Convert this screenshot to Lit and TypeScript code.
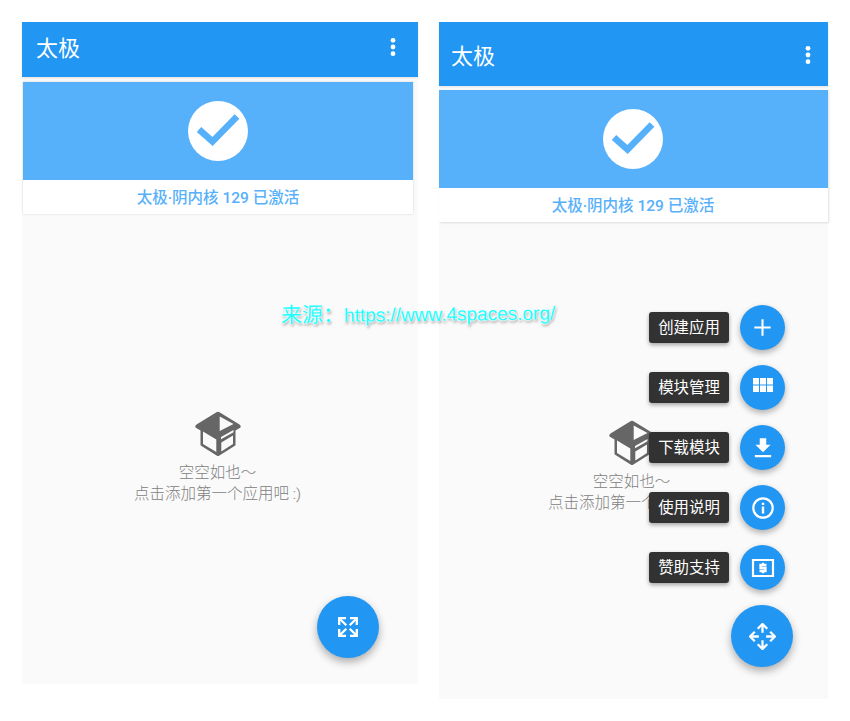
import { LitElement, html, css, svg } from "lit";
import { customElement } from "lit/decorators.js";

const sv = (inner: unknown, size: number, box = 24) =>
  html`<svg width=${size} height=${size} viewBox="0 0 ${box} ${box}">${inner}</svg>`;

const ICONS = {
  dots: sv(svg`<circle cx="12" cy="5.300" r="2.400" fill="#fff"/><circle cx="12" cy="12" r="2.400" fill="#fff"/><circle cx="12" cy="18.700" r="2.400" fill="#fff"/>`, 24),
  check: sv(svg`<circle cx="30" cy="30" r="30" fill="#fff"/><path d="M11 28.500 L24.500 40.500 L49 15.500" fill="none" stroke="#57b0fa" stroke-width="6.600"/>`, 60, 60),
  box: html`<svg width="48" height="46" viewBox="6 4 48 46">
    <path fill="#666" fill-rule="evenodd" d="M28.500 5.200 Q30 4.300 31.500 5.200 L51.500 17.500 Q53.500 19 52.500 20.500 L47.500 23.500 L47.500 37.500 Q47.500 38.500 46.500 39 L31 48.800 Q30 49.300 29 48.800 L13.500 39 Q12.500 38.500 12.500 37.500 L12.500 23.500 L7.500 20.500 Q6.500 19 8.500 17.500 Z
      M15 24.500 L28.300 32.500 L28.300 45 L15 37 Z
      M31.700 9.500 L45.500 17 L31.700 24 Z
      M33 30 L45.500 23 L45.500 25.300 L33 32.300 Z
      M33.300 35.500 L45 28.500 L45 37 L33.300 44.500 Z"/>
  </svg>`,
  plus: sv(svg`<path d="M12 3.500V20.500M3.500 12H20.500" stroke="#fff" stroke-width="2.200" fill="none"/>`, 23, 24),
  grid: sv(svg`<path fill="#fff" d="M0 0h6v6.500H0zM7 0h6v6.500H7zM14 0h6v6.500h-6zM0 7.500h6V14H0zM7 7.500h6V14H7zM14 7.500h6V14h-6z"/>`, 20, 20),
  download: sv(svg`<path fill="#fff" d="M19 9h-4V3H9v6H5l7 7 7-7zM4.500 18.500v2h15v-2z"/>`, 26),
  info: sv(svg`<circle cx="12" cy="12" r="9.700" fill="none" stroke="#fff" stroke-width="2.200"/><path fill="#fff" d="M10.800 10.500h2.400v7h-2.400zM10.800 6.700h2.400v2.400h-2.400z"/>`, 24),
  money: sv(svg`<path fill="none" stroke="#fff" stroke-width="2.200" d="M2 4h20v16H2z"/><path fill="none" stroke="#fff" stroke-width="2.300" d="M15.500 9H9.500v3h5v3H8.500M12 6.800v2.200M12 15v2.200"/>`, 24),
  move: sv(svg`<g fill="none" stroke="#fff" stroke-width="2.200"><path d="M13 1.500V9.500M13 16.500V24.500M1.500 13H9.500M16.500 13H24.500"/><path d="M8.400 5.600 13 1l4.600 4.600M8.400 20.400 13 25l4.600-4.600M5.600 8.400 1 13l4.600 4.600M20.400 8.400 25 13l-4.600 4.600"/></g>`, 27, 26),
  expand: sv(svg`<g fill="none" stroke="#fff" stroke-width="2.300"><path d="M1.200 8V1.200H8M1.200 1.200 8.300 8.300M12 1.200h6.800V8M18.800 1.200 11.700 8.300M1.200 12v6.800H8M1.200 18.800l7.100-7.100M18.800 12v6.800H12M18.800 18.800l-7.100-7.100"/></g>`, 20, 20),
};

const MENU = [
  ["创建应用", ICONS.plus],
  ["模块管理", ICONS.grid],
  ["下载模块", ICONS.download],
  ["使用说明", ICONS.info],
  ["赞助支持", ICONS.money],
] as const;

@customElement("app-root")
export class AppRoot extends LitElement {
  static styles = css`
    :host {
      display: block;
      position: relative;
      width: 850px;
      height: 721px;
      overflow: hidden;
      background: #fff;
      font-family: Roboto, "Noto Sans CJK SC", sans-serif;
    }
    .page {
      display: flex;
      align-items: flex-start;
      gap: 21px;
      padding: 22px 0 0 22px;
    }
    .phone {
      position: relative;
      display: flex;
      flex-direction: column;
      background: #fafafa;
    }
    .phone.a { width: 396px; height: 662px; }
    .phone.b { width: 389px; height: 677px; }
    .bar {
      display: flex;
      align-items: center;
      justify-content: space-between;
      flex: none;
      box-sizing: border-box;
      background: #2196f3;
      color: #fff;
      font-size: 22px;
      box-shadow: 0 1px 2px rgba(0, 0, 0, 0.1);
    }
    .bar span { padding-bottom: 3px; }
    .a .bar { height: 55px; padding: 0 13px 5px 14px; }
    .b .bar { height: 64px; padding: 2px 8px 0 12px; }
    .card {
      flex: none;
      margin-top: 4px;
      background: #fff;
      box-shadow: 1px 1px 2px rgba(0, 0, 0, 0.12);
    }
    .a .card {
      margin: 5px 5px 0 1px;
      box-shadow: 0 0 2px rgba(0, 0, 0, 0.16);
    }
    .banner {
      display: flex;
      align-items: center;
      justify-content: center;
      height: 98px;
      background: #57b0fa;
    }
    .b .banner { padding-right: 1px; }
    .status {
      box-sizing: border-box;
      height: 34px;
      padding-top: 1px;
      line-height: 34px;
      text-align: center;
      color: #57b0fa;
      font-size: 15.500px;
      font-weight: 500;
    }
    .b .status { padding-right: 1px; }
    .empty {
      flex: 1;
      display: flex;
      flex-direction: column;
      align-items: center;
      justify-content: center;
      color: #808080;
      font-size: 15.500px;
      line-height: 21px;
      font-weight: 300;
      text-align: center;
    }
    .a .empty { padding: 18px 5px 0 0; }
    .b .empty { padding: 13px 4px 0 0; }
    .empty svg { display: block; margin-bottom: 6px; }
    .fab {
      display: flex;
      align-items: center;
      justify-content: center;
      flex: none;
      width: 62px;
      height: 62px;
      border-radius: 50%;
      background: #2196f3;
      box-shadow: 0 4px 8px rgba(0, 0, 0, 0.32);
    }
    .a .fab { position: absolute; right: 39px; bottom: 26px; }
    .dial {
      position: absolute;
      right: 35px;
      bottom: 32px;
      display: flex;
      flex-direction: column;
      align-items: flex-end;
      gap: 15px;
    }
    .row {
      display: flex;
      align-items: center;
      gap: 11px;
      padding-right: 8px;
    }
    .label {
      width: 80px;
      height: 31px;
      line-height: 32px;
      text-align: center;
      border-radius: 3px;
      background: #323232;
      color: #fff;
      font-size: 15.400px;
      box-shadow: 0 2px 4px rgba(0, 0, 0, 0.35);
    }
    .mini {
      display: flex;
      align-items: center;
      justify-content: center;
      width: 45px;
      height: 45px;
      border-radius: 50%;
      background: #2196f3;
      box-shadow: 0 3px 6px rgba(0, 0, 0, 0.3);
    }
    .mark {
      position: absolute;
      left: 281px;
      top: 300px;
      white-space: nowrap;
      color: #1cffff;
      font-family: "Liberation Sans", "Noto Sans CJK SC", sans-serif;
      font-size: 19px;
      line-height: 28px;
      transform: rotate(-0.6deg);
      text-shadow: 0 0 1px #fff, 0 0 2px #fff, 0 0 2px #fff, 0 0 3px #fff, 1px 2px 3px rgba(0, 0, 0, 0.5);
    }
    .mark span { font-size: 21px; }
  `;

  private phone(kind: string, overlay: unknown) {
    return html`
      <section class="phone ${kind}">
        <header class="bar"><span>太极</span>${ICONS.dots}</header>
        <div class="card">
          <div class="banner">${ICONS.check}</div>
          <div class="status">太极·阴内核 129 已激活</div>
        </div>
        <div class="empty">
          ${ICONS.box}
          <div>空空如也～</div>
          <div>点击添加第一个应用吧 :)</div>
        </div>
        ${overlay}
      </section>
    `;
  }

  render() {
    const dial = html`
      <div class="dial">
        ${MENU.map(
          ([text, icon]) => html`
            <div class="row"><span class="label">${text}</span><span class="mini">${icon}</span></div>
          `
        )}
        <div class="fab">${ICONS.move}</div>
      </div>
    `;
    return html`
      <div class="page">
        ${this.phone("a", html`<div class="fab">${ICONS.expand}</div>`)}
        ${this.phone("b", dial)}
      </div>
      <div class="mark"><span>来源：</span>https://www.4spaces.org/</div>
    `;
  }
}
